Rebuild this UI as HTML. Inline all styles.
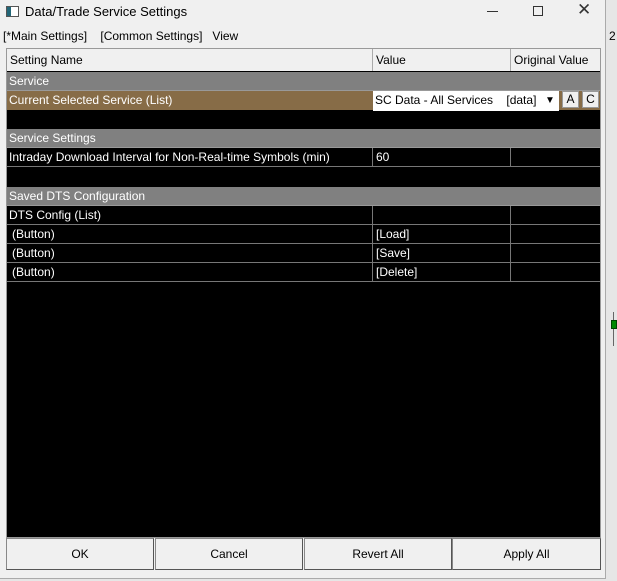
<!DOCTYPE html><html><head><style>
*{margin:0;padding:0;box-sizing:border-box}
body{width:617px;height:581px;background:#e6e6e6;font-family:"Liberation Sans",sans-serif;font-size:12px;position:relative;overflow:hidden}
.win{position:absolute;left:0;top:0;width:606px;height:579px;background:#f0f0f0;border-right:1px solid #aaa;border-bottom:1px solid #aaa}
.a{position:absolute;white-space:nowrap}
.grid{position:absolute;left:6px;top:48px;width:595px;height:490px;background:#000;border:1px solid #999}
.r{position:absolute;left:0;width:593px;height:19px;line-height:18px;color:#fff}
.c{position:absolute;top:0;height:19px;padding-left:3px;border-bottom:1px solid #777}
.b{position:absolute;top:538px;height:32px;background:#f0f0f0;border:1px solid #888;border-right-color:#555;border-bottom-color:#555;text-align:center;line-height:30px;font-size:12px}
</style></head><body>
<div class="win">
<div class="a" style="left:6px;top:6px;width:13px;height:11px;background:#fff;border:1px solid #555"><div style="width:4px;height:9px;background:#267"></div></div>
<div class="a" style="left:25px;top:4px;font-size:13px">Data/Trade Service Settings</div>
<div class="a" style="left:487px;top:11px;width:11px;height:1px;background:#333"></div>
<div class="a" style="left:533px;top:6px;width:10px;height:10px;border:1px solid #333"></div>
<div class="a" style="left:577px;top:0px;font-size:17px;color:#333">✕</div>
<div class="a" style="left:3px;top:29px">[*Main Settings]&nbsp;&nbsp;&nbsp; [Common Settings]&nbsp;&nbsp; View</div>
<div class="grid">
<div class="r" style="top:0;height:22px;background:#f0f0f0;color:#000;line-height:22px">
<div class="c" style="left:0;width:366px;height:22px;border-right:1px solid #aaa;border-bottom:none">Setting Name</div>
<div class="c" style="left:366px;width:138px;height:22px;border-right:1px solid #aaa;border-bottom:none">Value</div>
<div class="c" style="left:504px;width:89px;height:22px;border-bottom:none">Original Value</div></div>
<div class="r" style="top:23px;background:#808080;padding-left:2px;border-bottom:1px solid #999">Service</div>
<div class="r" style="top:42px;background:#876c47"><div class="c" style="left:0;padding-left:2px;border:none">Current Selected Service (List)</div></div>
<div class="a" style="left:366px;top:42px;width:186px;height:20px;background:#fff;color:#000;line-height:19px;padding-left:2px">SC Data - All Services&nbsp;&nbsp;&nbsp; [data]<span style="position:absolute;right:2px;top:2px;width:14px;height:15px;background:#fff;font-size:10px;line-height:15px;text-align:center">▼</span></div>
<div class="a" style="left:555px;top:42px;width:17px;height:17px;background:#f0f0f0;border:1px solid #999;text-align:center;line-height:15px;color:#000">A</div>
<div class="a" style="left:575px;top:42px;width:17px;height:17px;background:#f0f0f0;border:1px solid #999;text-align:center;line-height:15px;color:#000">C</div>
<div class="r" style="top:80px;background:#808080;padding-left:2px;border-bottom:1px solid #999">Service Settings</div>
<div class="r" style="top:99px"><div class="c" style="left:0;width:366px;border-right:1px solid #777;padding-left:2px">Intraday Download Interval for Non-Real-time Symbols (min)</div><div class="c" style="left:366px;width:138px;border-right:1px solid #777">60</div><div class="c" style="left:504px;width:89px"></div></div>
<div class="r" style="top:138px;background:#808080;padding-left:2px;border-bottom:1px solid #999">Saved DTS Configuration</div>
<div class="r" style="top:157px"><div class="c" style="left:0;width:366px;border-right:1px solid #777;padding-left:2px">DTS Config (List)</div><div class="c" style="left:366px;width:138px;border-right:1px solid #777"></div><div class="c" style="left:504px;width:89px"></div></div>
<div class="r" style="top:176px"><div class="c" style="left:0;width:366px;border-right:1px solid #777;padding-left:5px">(Button)</div><div class="c" style="left:366px;width:138px;border-right:1px solid #777">[Load]</div><div class="c" style="left:504px;width:89px"></div></div>
<div class="r" style="top:195px"><div class="c" style="left:0;width:366px;border-right:1px solid #777;padding-left:5px">(Button)</div><div class="c" style="left:366px;width:138px;border-right:1px solid #777">[Save]</div><div class="c" style="left:504px;width:89px"></div></div>
<div class="r" style="top:214px"><div class="c" style="left:0;width:366px;border-right:1px solid #777;padding-left:5px">(Button)</div><div class="c" style="left:366px;width:138px;border-right:1px solid #777">[Delete]</div><div class="c" style="left:504px;width:89px"></div></div>
</div>
<div class="b" style="left:6px;width:148px">OK</div>
<div class="b" style="left:155px;width:148px">Cancel</div>
<div class="b" style="left:304px;width:148px">Revert All</div>
<div class="b" style="left:452px;width:149px">Apply All</div>
</div>
<div class="a" style="left:609px;top:29px">2</div>
<div class="a" style="left:613px;top:312px;width:1px;height:34px;background:#666"></div>
<div class="a" style="left:611px;top:320px;width:6px;height:9px;background:#080;border:1px solid #040"></div>
</body></html>
